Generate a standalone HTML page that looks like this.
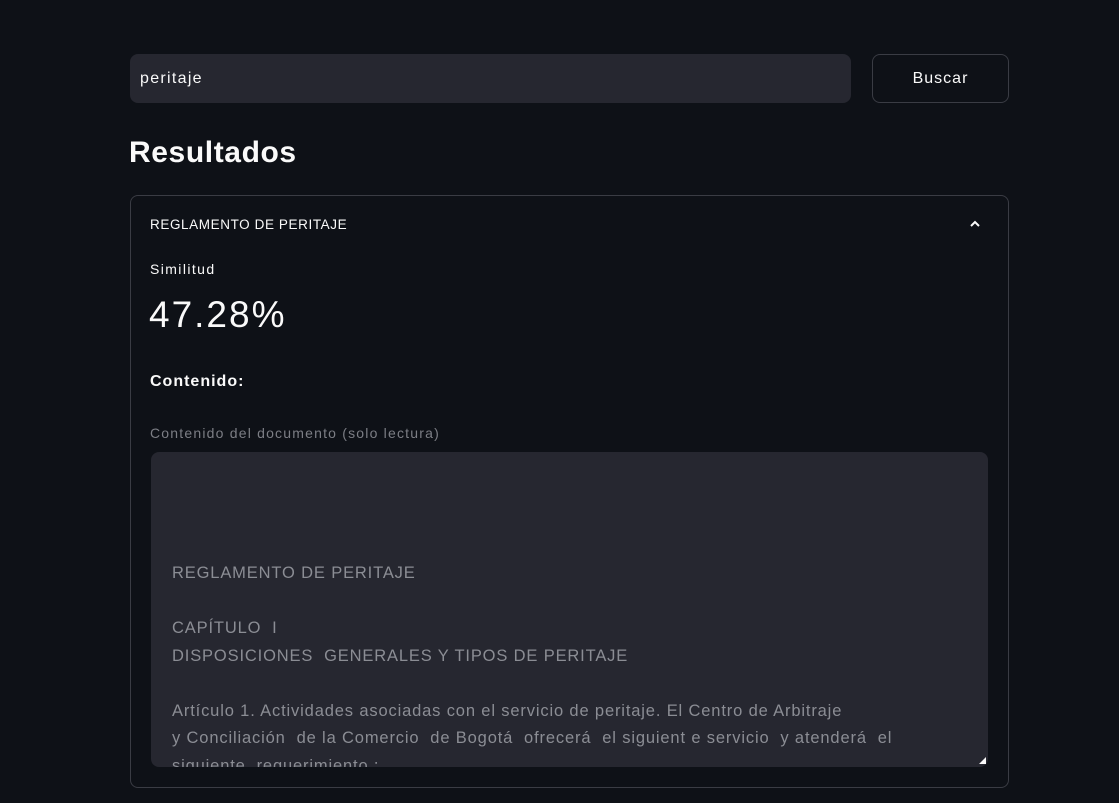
<!DOCTYPE html>
<html><head><meta charset="utf-8"><style>
*{margin:0;padding:0;box-sizing:border-box}
html,body{width:1119px;height:803px;background:#0e1117;overflow:hidden;font-family:"Liberation Sans",sans-serif;color:#fafafa}
.abs{position:absolute}
.inp{left:130px;top:54px;width:721px;height:49px;background:#262730;border-radius:8px;font-size:16px;padding-left:10px;line-height:49px;letter-spacing:1.3px}
.btn{left:872px;top:54px;width:137px;height:49px;border:1px solid #3a3c44;border-radius:8px;font-size:16px;text-align:center;line-height:47px;letter-spacing:1px}
h2{position:absolute;left:129px;top:136px;font-size:30px;font-weight:bold;letter-spacing:0.6px}
.box{left:130px;top:195px;width:879px;height:593px;border:1px solid #3a3c44;border-radius:8px}
.ta{left:151px;top:452px;width:837px;height:315px;background:#262730;border-radius:8px;overflow:hidden}
.ta div{position:absolute;left:21px;top:108px;font-size:16.5px;line-height:27.5px;color:#8b8d94;white-space:pre;letter-spacing:0.85px}
</style></head><body>
<div class="abs inp">peritaje</div>
<div class="abs btn">Buscar</div>
<h2>Resultados</h2>
<div class="abs box"></div>
<div class="abs" style="left:150px;top:217px;font-size:13.5px;letter-spacing:0.6px">REGLAMENTO DE PERITAJE</div>
<svg class="abs" style="left:969px;top:219px" width="12" height="10" viewBox="0 0 12 10"><path d="M2 7 L6 3 L10 7" stroke="#fafafa" stroke-width="2" fill="none"/></svg>
<div class="abs" style="left:150px;top:261px;font-size:14px;letter-spacing:1.4px">Similitud</div>
<div class="abs" style="left:149px;top:294px;font-size:37px;letter-spacing:2px">47.28%</div>
<div class="abs" style="left:150px;top:373px;font-size:16px;font-weight:bold;letter-spacing:1px">Contenido:</div>
<div class="abs" style="left:150px;top:425px;font-size:14px;color:#7c7e85;letter-spacing:1.2px">Contenido del documento (solo lectura)</div>
<div class="abs ta"><div>REGLAMENTO DE PERITAJE

CAPÍTULO  I
DISPOSICIONES  GENERALES Y TIPOS DE PERITAJE

Artículo 1. Actividades asociadas con el servicio de peritaje. El Centro de Arbitraje
y Conciliación  de la Comercio  de Bogotá  ofrecerá  el siguient e servicio  y atenderá  el
siguiente  requerimiento :</div></div>
<svg class="abs" style="left:978px;top:756px" width="8" height="8"><path d="M1 8 L8 8 L8 1 Z" fill="#fafafa"/></svg>
</body></html>
